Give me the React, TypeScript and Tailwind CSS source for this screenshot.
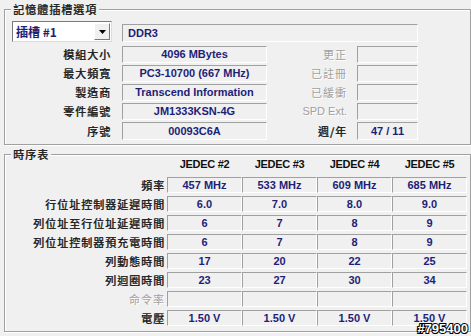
import React from 'react';

const CJK = "font-['Noto_Sans_CJK_TC',sans-serif]";
const VAL = "font-['Liberation_Sans','Noto_Sans_CJK_TC',sans-serif]";

// sunken read-only field, windows style
const Field: React.FC<{ w: string; children?: React.ReactNode; left?: boolean; h?: string }> = ({ w, children, left, h = 'h-[17px]' }) => (
  <div
    className={`${w} ${h} flex items-center border-t border-l border-t-[#a0a0a0] border-l-[#a0a0a0] border-b border-r border-b-white border-r-white bg-[#f0f0f0] ${
      left ? 'justify-start pl-[5px]' : 'justify-center'
    } ${VAL} text-[11px] font-bold leading-none text-[#1e1e78]`}
  >
    {children}
  </div>
);

const Label: React.FC<{ w: string; children: React.ReactNode; disabled?: boolean }> = ({ w, children, disabled }) => (
  <div
    className={`${w} shrink-0 text-right text-[11px] leading-none tracking-[1px] ${CJK} ${
      disabled ? 'font-normal text-[#a0a0a0] [text-shadow:1px_1px_0_#fff]' : 'font-normal text-[#222] [text-shadow:0.5px_0_0_#222]'
    }`}
  >
    {children}
  </div>
);

const GroupBox: React.FC<{ title: string; className: string; children: React.ReactNode }> = ({ title, className, children }) => (
  <div className={`relative border border-[#a0a0a0] shadow-[inset_1px_1px_0_#fff,1px_1px_0_#fff] ${className}`}>
    <div className={`absolute left-[6px] top-[-8px] bg-[#f0f0f0] px-[2px] text-[11px] leading-[14px] tracking-[1px] text-[#222] [text-shadow:0.5px_0_0_#222] ${CJK}`}>
      {title}
    </div>
    {children}
  </div>
);

const moduleRows = [
  { label: '模組大小', value: '4096 MBytes', rlabel: '更正', rvalue: '', rdis: true },
  { label: '最大頻寬', value: 'PC3-10700 (667 MHz)', rlabel: '已註冊', rvalue: '', rdis: true },
  { label: '製造商', value: 'Transcend Information', rlabel: '已緩衝', rvalue: '', rdis: true },
  { label: '零件編號', value: 'JM1333KSN-4G', rlabel: 'SPD Ext.', rvalue: '', rdis: true },
  { label: '序號', value: '00093C6A', rlabel: '週/年', rvalue: '47 / 11', rdis: false },
];

const timingRows: { label: string; values: string[]; disabled?: boolean }[] = [
  { label: '頻率', values: ['457 MHz', '533 MHz', '609 MHz', '685 MHz'] },
  { label: '行位址控制器延遲時間', values: ['6.0', '7.0', '8.0', '9.0'] },
  { label: '列位址至行位址延遲時間', values: ['6', '7', '8', '9'] },
  { label: '列位址控制器預充電時間', values: ['6', '7', '8', '9'] },
  { label: '列動態時間', values: ['17', '20', '22', '25'] },
  { label: '列迴圈時間', values: ['23', '27', '30', '34'] },
  { label: '命令率', values: ['', '', '', ''], disabled: true },
  { label: '電壓', values: ['1.50 V', '1.50 V', '1.50 V', '1.50 V'] },
];

const App: React.FC = () => {
  return (
    <div className="relative h-[336px] w-[471px] overflow-hidden bg-[#f0f0f0] pt-[9px] pl-[4px]">
      <GroupBox title="記憶體插槽選項" className="h-[136px] w-[467px]">
        <div className="flex flex-col gap-[2px] pl-[7px] pt-[11px]">
          <div className="mb-[2px] flex h-[21px] items-end">
            {/* slot dropdown */}
            <div className="flex h-[21px] w-[100px] items-stretch border border-t-[#7a7a7a] border-l-[#7a7a7a] border-b-[#dcdcdc] border-r-[#dcdcdc] bg-white">
              <div className={`flex flex-1 items-center pl-[3px] text-[12px] font-bold leading-none text-[#1e1e78] ${CJK}`}>
                插槽 #1
              </div>
              <div className="m-[1px] flex w-[16px] items-center justify-center border border-t-white border-l-white border-b-[#7a7a7a] border-r-[#7a7a7a] bg-[#f0f0f0]">
                <svg width="7" height="4" viewBox="0 0 7 4">
                  <path d="M0 0h7L3.5 4z" fill="#000" />
                </svg>
              </div>
            </div>
            <div className="ml-[10px]">
              <Field w="w-[296px]" h="h-[18px]" left>
                DDR3
              </Field>
            </div>
          </div>
          {moduleRows.map((r, i) => (
            <div key={r.label} className={`flex items-center ${i === 4 ? 'h-[18px]' : 'h-[17px]'}`}>
              <Label w="w-[99px]">{r.label}</Label>
              <div className="ml-[11px]">
                <Field w="w-[145px]" h={i === 4 ? 'h-[18px]' : 'h-[17px]'}>{r.value}</Field>
              </div>
              <div className={`w-[80px] shrink-0 text-right leading-none ${
                r.label === '零件編號' ? "font-['Liberation_Sans',sans-serif] text-[11px]" : `${CJK} text-[11px] tracking-[1px]`
              } ${r.rdis ? 'text-[#a0a0a0] [text-shadow:1px_1px_0_#fff]' : 'text-[#222] [text-shadow:0.5px_0_0_#222]'}`}>
                {r.rlabel}
              </div>
              <div className="ml-[10px]">
                <Field w="w-[61px]" h={i === 4 ? 'h-[18px]' : 'h-[17px]'}>{r.rvalue}</Field>
              </div>
            </div>
          ))}
        </div>
      </GroupBox>

      <div className="mt-[9px]">
        <GroupBox title="時序表" className="h-[178px] w-[467px]">
          <div className="flex flex-col pl-[8px] pt-[2px]">
            <div className="flex h-[14px] items-center">
              <div className="w-[154px] shrink-0" />
              {['JEDEC #2', 'JEDEC #3', 'JEDEC #4', 'JEDEC #5'].map((h) => (
                <div key={h} className={`w-[75px] text-center text-[11px] font-bold leading-none tracking-[-0.3px] text-[#111] ${VAL}`}>
                  {h}
                </div>
              ))}
            </div>
            <div className="mt-[6px] flex flex-col gap-[3px]">
              {timingRows.map((r) => (
                <div key={r.label} className="flex h-[16px] items-center">
                  <Label w="w-[152px]" disabled={r.disabled}>
                    {r.label}
                  </Label>
                  <div className="ml-[2px] flex">
                    {r.values.map((v, j) => (
                      <Field key={j} w="w-[75px]" h="h-[16px]">
                        {v}
                      </Field>
                    ))}
                  </div>
                </div>
              ))}
            </div>
          </div>
        </GroupBox>
      </div>

      <div className={`absolute right-[3px] bottom-[1px] text-[13px] font-bold leading-none text-white ${VAL} [-webkit-text-stroke:2px_#000] [paint-order:stroke_fill]`}>
        #795400
      </div>
    </div>
  );
};

export default App;
